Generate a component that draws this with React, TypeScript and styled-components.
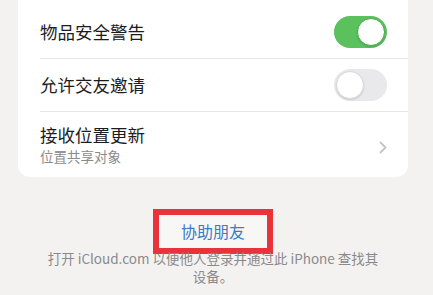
import React from "react";
import styled, { createGlobalStyle } from "styled-components";

const GlobalStyle = createGlobalStyle`
  html, body {
    margin: 0;
    padding: 0;
    background: #f3f2f0;
    font-family: "Noto Sans CJK SC", "Noto Sans", sans-serif;
    overflow: hidden;
  }
`;

const Page = styled.div`
  width: 433px;
  height: 295px;
  padding: 0 25px 0 18px;
  box-sizing: border-box;
  display: flex;
  flex-direction: column;
  align-items: stretch;
`;

const Card = styled.div`
  margin-top: -12px;
  background: #ffffff;
  border-radius: 0 0 12px 12px;
  padding-left: 22px;
`;

const Row = styled.div<{ $top?: number; $height: number; $last?: boolean }>`
  padding-top: ${(p) => p.$top ?? 0}px;
  height: ${(p) => p.$height}px;
  box-sizing: content-box;
  display: flex;
  align-items: center;
  justify-content: space-between;
  padding-right: 21px;
  border-bottom: ${(p) => (p.$last ? "none" : "1px solid #e6e6e8")};
`;

const Labels = styled.div`
  display: flex;
  flex-direction: column;
`;

const Title = styled.span`
  font-size: 17.5px;
  color: #1c1c1e;
  line-height: 22px;
`;

const Subtitle = styled.span`
  font-size: 13.5px;
  color: #8a8a8e;
  line-height: 18px;
  margin-top: 1px;
`;

const Track = styled.div<{ $on: boolean }>`
  width: 53px;
  height: 32px;
  border-radius: 16px;
  background: ${(p) => (p.$on ? "#5bc15d" : "#e9e9eb")};
  display: flex;
  align-items: center;
  justify-content: ${(p) => (p.$on ? "flex-end" : "flex-start")};
  padding: 0 2px;
  box-sizing: border-box;
`;

const Knob = styled.div<{ $on: boolean }>`
  width: 28px;
  height: 28px;
  border-radius: 50%;
  background: #ffffff;
  box-sizing: border-box;
  border: 1px solid ${(p) => (p.$on ? "#4aa84c" : "#d8d8da")};
  box-shadow: 0 1px 2px rgba(0, 0, 0, 0.12);
`;

const Footer = styled.div`
  display: flex;
  flex-direction: column;
  align-items: center;
  margin-top: 32px;
`;

const HelpLink = styled.div`
  border: 6px solid #e8333c;
  padding: 5px 22px;
  font-size: 16px;
  line-height: 23px;
  color: #3a7ac8;
  background: #f7f7f6;
`;

const Note = styled.p`
  margin: -5px 0 0;
  padding: 0 28px;
  font-size: 13.5px;
  line-height: 18px;
  color: #8a8a8c;
  text-align: center;
`;

const Toggle = ({ on }: { on: boolean }) => (
  <Track $on={on}>
    <Knob $on={on} />
  </Track>
);

const Chevron = () => (
  <svg width="8" height="13" viewBox="0 0 8 13" style={{ marginTop: 6 }}>
    <polyline points="1.5,1.5 6.5,6.5 1.5,11.5" fill="none" stroke="#c4c4c7" strokeWidth="1.8" strokeLinecap="round" strokeLinejoin="round" />
  </svg>
);

export default function App() {
  return (
    <>
      <GlobalStyle />
      <Page>
        <Card>
          <Row $top={18} $height={52}>
            <Title>物品安全警告</Title>
            <Toggle on />
          </Row>
          <Row $height={52}>
            <Title>允许交友邀请</Title>
            <Toggle on={false} />
          </Row>
          <Row $height={65} $last>
            <Labels>
              <Title>接收位置更新</Title>
              <Subtitle>位置共享对象</Subtitle>
            </Labels>
            <Chevron />
          </Row>
        </Card>
        <Footer>
          <HelpLink>协助朋友</HelpLink>
          <Note>打开 iCloud.com 以便他人登录并通过此 iPhone 查找其设备。</Note>
        </Footer>
      </Page>
    </>
  );
}
